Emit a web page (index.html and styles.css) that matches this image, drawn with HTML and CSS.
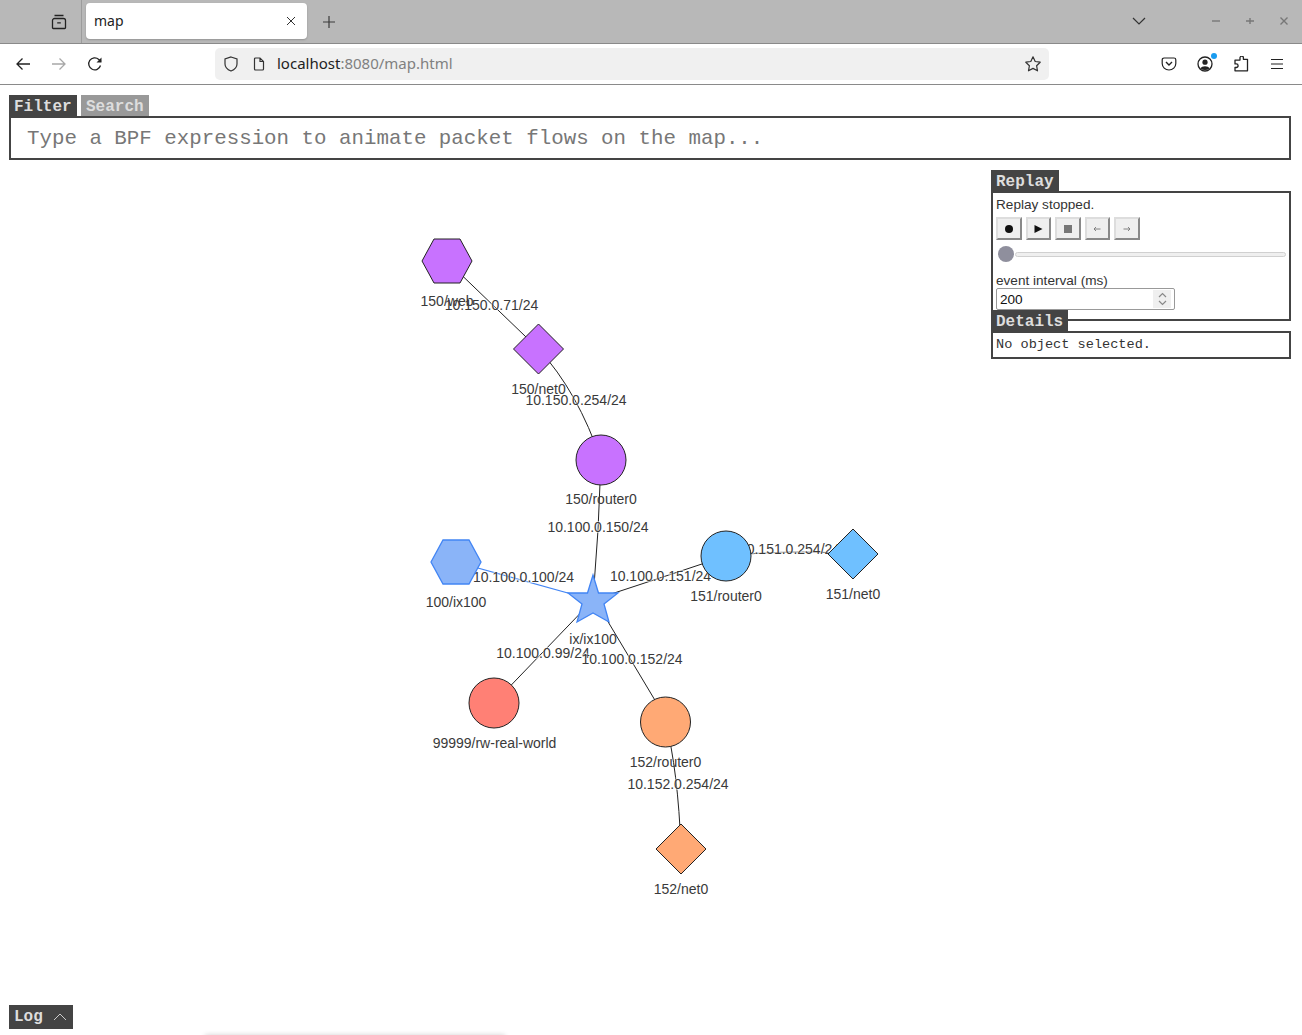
FILE: index.html
```
<!DOCTYPE html>
<html lang="en">
<head>
<meta charset="utf-8">
<title>map</title>
<link rel="stylesheet" href="styles.css">
</head>
<body>
<header class="tabbar">
  <div class="tabbar-left">
    <svg class="ico" width="16" height="16" viewBox="0 0 16 16"><path d="M3.500 1.500h9M1.500 6.500a2 2 0 0 1 2-2h9a2 2 0 0 1 2 2v7.200a.8.8 0 0 1-.8.8H2.300a.8.8 0 0 1-.8-.8zM6.200 8.800h3.600" fill="none" stroke="#222" stroke-width="1.300"/></svg>
  </div>
  <div class="tab">
    <span class="tab-title">map</span>
    <svg width="10" height="10" viewBox="0 0 10 10"><path d="M1 1l8 8M9 1l-8 8" stroke="#333" stroke-width="1" fill="none"/></svg>
  </div>
  <svg class="newtab" width="14" height="14" viewBox="0 0 14 14"><path d="M7 1v12M1 7h12" stroke="#3a3a3a" stroke-width="1.200" fill="none"/></svg>
  <div class="tabbar-right">
    <svg class="listtabs" width="14" height="8" viewBox="0 0 14 8"><path d="M1 1l6 6 6-6" stroke="#333" stroke-width="1.200" fill="none"/></svg>
    <svg class="winbtn" width="12" height="12" viewBox="0 0 12 12"><path d="M2 6h8" stroke="#777" stroke-width="1.400"/></svg>
    <svg class="winbtn" width="12" height="12" viewBox="0 0 12 12"><path d="M2 6h8M6 3v6" stroke="#777" stroke-width="1.400"/></svg>
    <svg class="winbtn" width="12" height="12" viewBox="0 0 12 12"><path d="M2.500 2.500l7 7M9.500 2.500l-7 7" stroke="#777" stroke-width="1.400"/></svg>
  </div>
</header>
<nav class="toolbar">
  <div class="nav-icons">
    <svg width="16" height="16" viewBox="0 0 16 16"><path d="M15 8H2M7.500 2.500L2 8l5.500 5.500" stroke="#222" stroke-width="1.300" fill="none"/></svg>
    <svg width="16" height="16" viewBox="0 0 16 16"><path d="M1 8h13M8.500 2.500L14 8l-5.500 5.500" stroke="#a8a8a8" stroke-width="1.300" fill="none"/></svg>
    <svg width="16" height="16" viewBox="0 0 16 16"><path d="M13.500 9.500A6 6 0 1 1 11.800 3.400L14 5.500" stroke="#222" stroke-width="1.300" fill="none"/><path d="M14.500 1.500v5h-5z" fill="#222"/></svg>
  </div>
  <div class="urlbar">
    <svg width="16" height="16" viewBox="0 0 16 16"><path d="M8 1l6 2v5c0 3.500-3 5.800-6 7-3-1.200-6-3.500-6-7V3z" stroke="#333" stroke-width="1.200" fill="none"/></svg>
    <svg class="page-ico" width="14" height="14" viewBox="0 0 14 14"><path d="M2.500 2a1 1 0 0 1 1-1h4.500l3.500 3.500V12a1 1 0 0 1-1 1H3.500a1 1 0 0 1-1-1zM8 1v3.500h3.500" stroke="#333" stroke-width="1.200" fill="none"/></svg>
    <span class="url"><span class="url-host">localhost</span>:8080/map.html</span>
    <svg class="star" width="18" height="18" viewBox="0 0 18 18"><path d="M9 1.800l2.200 4.700 5 .7-3.600 3.500.9 5.100L9 13.400l-4.500 2.400.9-5.100-3.600-3.500 5-.7z" stroke="#333" stroke-width="1.200" fill="none" stroke-linejoin="round"/></svg>
  </div>
  <div class="tool-icons">
    <svg width="16" height="14" viewBox="0 0 16 14"><path d="M3 1h10a1.800 1.800 0 0 1 1.800 1.800V6.500A6.800 6.500 0 0 1 1.200 6.500V2.800A1.800 1.800 0 0 1 3 1z" stroke="#222" stroke-width="1.200" fill="none"/><path d="M5 5l3 3 3-3" stroke="#222" stroke-width="1.400" fill="none"/></svg>
    <span class="account">
      <svg width="16" height="16" viewBox="0 0 16 16"><circle cx="8" cy="8" r="7" stroke="#222" stroke-width="1.300" fill="none"/><circle cx="8" cy="6.200" r="2.600" fill="#222"/><path d="M3.200 12.200a5.500 3.800 0 0 1 9.600 0A7 7 0 0 1 3.200 12.200z" fill="#222"/></svg>
      <i class="badge"></i>
    </span>
    <svg width="16" height="16" viewBox="0 0 16 16"><path d="M7 1.500a1.700 1.700 0 0 1 3.400 0V3H14.500v11.500H2v-3.300h1.300a1.800 1.800 0 0 0 0-3.600H2V3.800h5z" stroke="#222" stroke-width="1.300" fill="none" stroke-linejoin="round" transform="translate(0 .3)"/></svg>
    <svg class="menu" width="14" height="12" viewBox="0 0 14 12"><path d="M1 1.500h12M1 6h12M1 10.500h12" stroke="#222" stroke-width="1.200"/></svg>
  </div>
</nav>
<main class="page">
  <svg class="map" width="1302" height="950" viewBox="0 85 1302 950">
    <g class="edges">
      <path d="M447 261L538.500 349"/>
      <path d="M538.500 349Q578 392 601 460"/>
      <path d="M601 460Q599 530 593 600"/>
      <path class="edge-blue" d="M456 562L593 600"/>
      <path d="M726 556Q660 578 593 600"/>
      <path class="edge-grey" d="M726 556Q790 549 853 554"/>
      <path d="M494 703L593 600"/>
      <path d="M595 600L668 722"/>
      <path d="M665.500 722Q678 770 681 849"/>
    </g>
    <g class="edge-labels">
      <text x="491.500" y="310">10.150.0.71/24</text>
      <text x="576" y="405">10.150.0.254/24</text>
      <text x="598" y="532">10.100.0.150/24</text>
      <text x="523.500" y="582">10.100.0.100/24</text>
      <text x="660.500" y="581">10.100.0.151/24</text>
      <text x="789.500" y="554">10.151.0.254/24</text>
      <text x="543" y="658">10.100.0.99/24</text>
      <text x="632" y="664">10.100.0.152/24</text>
      <text x="678" y="789">10.152.0.254/24</text>
    </g>
    <g class="nodes">
      <polygon class="purple" points="422,261 434,239 460,239 472,261 460,283 434,283"/>
      <polygon class="purple" points="538.500,324 563.500,349 538.500,374 513.500,349"/>
      <circle class="purple" cx="601" cy="460" r="25"/>
      <polygon class="bluehex" points="431,562 443,540 469,540 481,562 469,584 443,584"/>
      <polygon class="bluehex" points="593,575 598.500,593 618,593 604,604 609,622 593,613 577,622 582,604 568,593 587.500,593"/>
      <circle class="sky" cx="726" cy="556" r="25"/>
      <polygon class="sky" points="853,529 878,554 853,579 828,554"/>
      <circle class="red" cx="494" cy="703" r="25"/>
      <circle class="orange" cx="665.500" cy="722" r="25"/>
      <polygon class="orange" points="681,824 706,849 681,874 656,849"/>
    </g>
    <g class="node-labels">
      <text x="447" y="306">150/web</text>
      <text x="538.500" y="394">150/net0</text>
      <text x="601" y="504">150/router0</text>
      <text x="456" y="607">100/ix100</text>
      <text x="593" y="644">ix/ix100</text>
      <text x="726" y="601">151/router0</text>
      <text x="853" y="599">151/net0</text>
      <text x="494.500" y="748">99999/rw-real-world</text>
      <text x="665.500" y="767">152/router0</text>
      <text x="681" y="894">152/net0</text>
    </g>
  </svg>

  <section class="filter">
    <div class="tabs">
      <span class="label">Filter</span>
      <span class="label label-off">Search</span>
    </div>
    <div class="filter-box">Type a BPF expression to animate packet flows on the map...</div>
  </section>

  <aside class="side">
    <span class="label">Replay</span>
    <div class="box replay">
      <div class="status">Replay stopped.</div>
      <div class="buttons">
        <button class="btn"><svg width="10" height="10" viewBox="0 0 10 10"><circle cx="5" cy="5" r="4" fill="#111"/></svg></button>
        <button class="btn"><svg width="10" height="10" viewBox="0 0 10 10"><path d="M1.500 1l8 4-8 4z" fill="#111"/></svg></button>
        <button class="btn"><svg width="10" height="10" viewBox="0 0 10 10"><rect x="1" y="1" width="8" height="8" fill="#777"/></svg></button>
        <button class="btn"><svg width="8" height="8" viewBox="0 0 8 8"><path d="M7.500 4H1M3 2L1 4l2 2" stroke="#777" stroke-width=".9" fill="none"/></svg></button>
        <button class="btn"><svg width="8" height="8" viewBox="0 0 8 8"><path d="M.5 4H7M5 2l2 2-2 2" stroke="#777" stroke-width=".9" fill="none"/></svg></button>
      </div>
      <div class="slider"><i class="thumb"></i><i class="track"></i></div>
      <label class="field-label">event interval (ms)</label>
      <div class="number">
        <span class="number-value">200</span>
        <span class="spin">
          <svg width="9" height="6" viewBox="0 0 9 6"><path d="M1 5l3.500-3.500L8 5" stroke="#888" stroke-width="1.200" fill="none"/></svg>
          <svg width="9" height="6" viewBox="0 0 9 6"><path d="M1 1l3.500 3.500L8 1" stroke="#888" stroke-width="1.200" fill="none"/></svg>
        </span>
      </div>
    </div>
    <span class="label label-details">Details</span>
    <div class="box details">No object selected.</div>
  </aside>

  <div class="log">
    <span>Log</span>
    <svg width="14" height="8" viewBox="0 0 14 8"><path d="M1 7l6-6 6 6" stroke="#ccc" fill="none"/></svg>
  </div>
  <div class="bottom-shadow"></div>
</main>
</body>
</html>
```
FILE: styles.css
```
* { box-sizing: border-box; }
html, body { margin: 0; height: 100%; }
body {
  width: 1302px;
  height: 1035px;
  overflow: hidden;
  display: flex;
  flex-direction: column;
  background: #fff;
  font-family: "Noto Sans", sans-serif;
}
svg { display: block; flex: none; }

.tabbar {
  height: 44px;
  flex: none;
  display: flex;
  align-items: flex-start;
  background: #b8b8b8;
  border-bottom: 1px solid #8a8a8a;
}
.tabbar-left {
  width: 82px;
  height: 43px;
  display: flex;
  align-items: center;
  padding-left: 51px;
  border-right: 1px solid #9c9c9c;
}
.tab {
  margin: 3px 0 0 4px;
  width: 221px;
  height: 36px;
  background: #fff;
  border-radius: 4px;
  box-shadow: 0 1px 2px rgba(0,0,0,.2);
  display: flex;
  align-items: center;
  justify-content: space-between;
  padding: 0 11px 0 8px;
}
.tab-title { font-size: 14px; line-height: 16px; color: #222; }
.newtab { margin: 15px 0 0 15px; }
.tabbar-right {
  margin-left: auto;
  height: 43px;
  display: flex;
  align-items: center;
  padding: 0 12px 2px 0;
  gap: 22px;
}
.listtabs { margin-right: 42px; }

.toolbar {
  height: 41px;
  flex: none;
  display: flex;
  align-items: center;
  background: #fff;
  border-bottom: 1px solid #8a8a8a;
}
.nav-icons {
  width: 215px;
  display: flex;
  align-items: center;
  gap: 20px;
  padding-left: 15px;
}
.urlbar {
  width: 834px;
  height: 32px;
  background: #f0f0f0;
  border-radius: 5px;
  display: flex;
  align-items: center;
  padding: 0 7px 0 8px;
}
.page-ico { margin-left: 13px; }
.url { margin-left: 11px; font-size: 15px; line-height: 18px; color: #808080; padding-bottom: 2px; }
.url-host { color: #222; }
.star { margin-left: auto; }
.tool-icons {
  flex: 1;
  display: flex;
  align-items: center;
  gap: 20px;
  padding-left: 112px;
}
.menu { margin-left: 1px; }
.account { position: relative; display: block; }
.badge {
  position: absolute;
  top: -3px;
  right: -4px;
  width: 6px;
  height: 6px;
  border-radius: 50%;
  background: #1a9cf0;
}

.page {
  position: relative;
  flex: 1;
  padding: 10px 11px 0 9px;
}
.map { position: absolute; left: 0; top: 0; }
.edges path { fill: none; stroke: #222; stroke-width: 1; }
.edges .edge-blue { stroke: #4285f4; stroke-width: 1.200; }
.edges .edge-grey { stroke: #555; }
.edge-labels text, .node-labels text {
  font-family: "Liberation Sans", sans-serif;
  font-size: 14px;
  fill: #3a3a3a;
  text-anchor: middle;
}
.edge-labels text {
  paint-order: stroke;
  stroke: rgba(255,255,255,.55);
  stroke-width: 2px;
}
.nodes * { stroke: #222; stroke-width: 1; }
.nodes .purple { fill: #c872ff; }
.nodes .bluehex { fill: #8ab4f8; stroke: #4285f4; stroke-width: 1.300; }
.nodes .sky { fill: #6fc0ff; }
.nodes .red { fill: #ff8075; }
.nodes .orange { fill: #ffa975; }

.filter { position: relative; }
.tabs { display: flex; gap: 4px; }
.label {
  display: inline-block;
  height: 21px;
  padding: 0 5px;
  background: #444;
  color: #ddd;
  font: bold 16px/24px "Liberation Mono", monospace;
}
.tabs .label { width: 68px; }
.label-off { background: #999; }
.filter-box {
  height: 44px;
  border: 2px solid #444;
  background: #fff;
  padding-left: 16px;
  font: 20.800px/42px "Liberation Mono", monospace;
  color: #777;
}

.side {
  position: absolute;
  left: 991px;
  top: 85px;
  width: 300px;
  font-family: "Liberation Sans", sans-serif;
  display: flex;
  flex-direction: column;
  align-items: flex-start;
}
.box {
  width: 100%;
  border: 2px solid #444;
  background: #fff;
}
.replay {
  height: 130px;
  padding: 4px 3px 0 3px;
  color: #333;
  font-size: 13.600px;
}
.status { line-height: 16px; }
.buttons { display: flex; gap: 4px; margin-top: 4px; }
.btn {
  width: 25.500px;
  height: 23px;
  padding: 0;
  background: #efefef;
  border: 2px outset #ddd;
  display: flex;
  align-items: center;
  justify-content: center;
}
.slider {
  display: flex;
  align-items: center;
  height: 16px;
  margin-top: 6px;
  padding-left: 2px;
}
.thumb {
  width: 16px;
  height: 16px;
  border-radius: 50%;
  background: #8f8f9d;
}
.track {
  flex: 1;
  height: 5px;
  margin: 0 0 0 1px;
  background: #efefef;
  border: 1px solid #d0d0d0;
  border-radius: 3px;
}
.field-label { display: block; margin-top: 11px; line-height: 15px; }
.number {
  width: 179px;
  height: 22px;
  margin-top: 0;
  border: 1px solid #999;
  border-radius: 2px;
  display: flex;
  align-items: center;
  justify-content: space-between;
  padding: 0 3px 0 3px;
  color: #111;
}
.spin {
  width: 18px;
  height: 18px;
  background: #efefef;
  display: flex;
  flex-direction: column;
  align-items: center;
  justify-content: center;
  gap: 2px;
}
.label-details { position: relative; margin-top: -11px; }
.details {
  height: 28px;
  padding-left: 3px;
  font: 13.600px/24px "Liberation Mono", monospace;
  color: #333;
}

.log {
  position: absolute;
  left: 9px;
  bottom: 6px;
  width: 64px;
  height: 24px;
  background: #444;
  color: #ddd;
  padding: 0 6px 0 5px;
  font: bold 16px/22px "Liberation Mono", monospace;
  display: flex;
  align-items: center;
  justify-content: space-between;
}
.bottom-shadow {
  position: absolute;
  left: 205px;
  bottom: -4px;
  width: 300px;
  height: 4px;
  box-shadow: 0 0 5px rgba(0,0,0,.2);
}
```
